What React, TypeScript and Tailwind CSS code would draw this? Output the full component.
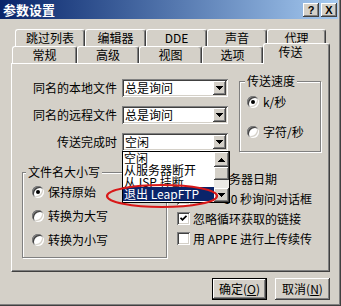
import React from 'react'

const raised = 'shadow-[inset_-1px_-1px_0_#404040,inset_1px_1px_0_#fff,inset_-2px_-2px_0_#808080]'
const sunken = 'shadow-[inset_1px_1px_0_#808080,inset_-1px_-1px_0_#fff,inset_2px_2px_0_#404040,inset_-2px_-2px_0_#d4d0c8]'
const tabBase = 'h-[17px] flex items-center justify-center border-t border-l border-r border-t-white border-l-white border-r-[#404040] rounded-t-[3px] shadow-[inset_-1px_0_0_#808080] leading-[14px]'

const backTabs = [
  { label: '跳过列表', w: 'w-[70px]' },
  { label: '编辑器', w: 'w-[61px]' },
  { label: 'DDE', w: 'w-[61px]' },
  { label: '声音', w: 'w-[60px]' },
  { label: '代理', w: 'w-[59px]' },
]

const frontTabs = [
  { label: '常规', w: 'w-[65px]' },
  { label: '高级', w: 'w-[62px]' },
  { label: '视图', w: 'w-[63px]' },
  { label: '选项', w: 'w-[61px]' },
]

function Arrow({ up = false }: { up?: boolean }) {
  return (
    <svg width="7" height="4" viewBox="0 0 7 4" className={up ? 'rotate-180' : ''}>
      <path d="M0 0h7v1h-1v1h-1v1h-1v1h-1v-1h-1v-1h-1v-1h-1z" fill="#000" />
    </svg>
  )
}

function Combo({ value, children }: { value: string; children?: React.ReactNode }) {
  return (
    <div className={`relative w-[106px] h-[18px] bg-white flex items-center ${sunken}`}>
      <span className="flex-1 pl-[3px] leading-[14px]">{value}</span>
      <div className={`mr-[2px] w-[13px] h-[14px] bg-[#d4d0c8] flex items-center justify-center ${raised}`}>
        <Arrow />
      </div>
      {children}
    </div>
  )
}

function Radio({ checked = false, label }: { checked?: boolean; label: string }) {
  return (
    <div className="flex items-center gap-[4px] h-[14px]">
      <span className="w-[12px] h-[12px] rounded-full bg-white flex items-center justify-center shadow-[inset_1px_1px_0_#808080,inset_-1px_-1px_0_#fff,inset_2px_2px_0_#404040,inset_-2px_-2px_0_#d4d0c8]">
        {checked && <span className="w-[4px] h-[4px] rounded-full bg-black" />}
      </span>
      <span className="leading-[14px]">{label}</span>
    </div>
  )
}

function Check({ checked = false, children }: { checked?: boolean; children: React.ReactNode }) {
  return (
    <div className="flex items-center gap-[3px] h-[13px]">
      <span className={`w-[13px] h-[13px] shrink-0 bg-white flex items-center justify-center ${sunken}`}>
        {checked && (
          <svg width="7" height="7" viewBox="0 0 7 7">
            <polyline points="0.5,2.8 2.5,4.8 6.5,0.8" fill="none" stroke="#000" strokeWidth="1.8" />
          </svg>
        )}
      </span>
      <span className="leading-[13px] whitespace-nowrap">{children}</span>
    </div>
  )
}

function Group({ title, titleClass, className, children }: { title: string; titleClass: string; className: string; children: React.ReactNode }) {
  return (
    <div className={`relative border border-[#808080] shadow-[inset_1px_1px_0_#fff,1px_1px_0_#fff] ${className}`}>
      <span className={`absolute -top-[8px] px-[2px] bg-[#d4d0c8] leading-[14px] ${titleClass}`}>{title}</span>
      {children}
    </div>
  )
}

function DropList() {
  return (
    <div className="absolute top-full left-0 z-20 w-[108px] h-[52px] bg-white border border-black flex">
      <div className="flex-1 flex flex-col">
        <div className="h-[12px] pl-[1px] leading-[12px]">空闲</div>
        <div className="h-[12px] pl-[1px] leading-[12px]">从服务器断开</div>
        <div className="h-[11px] pl-[1px] leading-[12px] overflow-hidden">从 ISP 挂断</div>
        <div className="h-[14px] pl-[1px] leading-[14px] bg-[#0a246a] text-white">退出 LeapFTP</div>
      </div>
      <div className="w-[15px] flex flex-col bg-[#ebe9e5]">
        <div className={`h-[15px] bg-[#d4d0c8] flex items-center justify-center ${raised}`}>
          <Arrow up />
        </div>
        <div className={`h-[13px] bg-[#d4d0c8] ${raised}`} />
        <div className="flex-1" />
        <div className={`h-[14px] bg-[#d4d0c8] flex items-center justify-center ${raised}`}>
          <Arrow />
        </div>
      </div>
    </div>
  )
}

export default function App() {
  return (
    <div className="relative w-[341px] h-[306px] overflow-hidden bg-[#d4d0c8] border-r border-b border-[#404040] shadow-[inset_-1px_-1px_0_#808080] text-[12px] text-black font-['Noto_Sans_CJK_SC',sans-serif]">
      {/* title bar */}
      <div className="h-[19px] mr-[2px] pl-[3px] pr-[1px] flex items-center bg-linear-to-r from-[#0a246a] to-[#a6caf0]">
        <span className="flex-1 text-white font-bold text-[13px] leading-[16px]">参数设置</span>
        <div className="flex gap-[2px]">
          <div className={`w-[16px] h-[14px] bg-[#d4d0c8] flex items-center justify-center font-bold text-[11px] leading-[12px] font-['Liberation_Sans',sans-serif] ${raised}`}>?</div>
          <div className={`w-[16px] h-[14px] bg-[#d4d0c8] flex items-center justify-center font-bold text-[11px] leading-[12px] font-['Liberation_Sans',sans-serif] ${raised}`}>X</div>
        </div>
      </div>

      <div className="pl-[11px]">
        {/* tabs */}
        <div className="mt-[10px] pl-[4px] flex">
          {backTabs.map((t) => (
            <div key={t.label} className={`${tabBase} ${t.w}`}>{t.label}</div>
          ))}
        </div>
        <div className="pl-[1px] flex items-start h-[17px]">
          {frontTabs.map((t) => (
            <div key={t.label} className={`${tabBase} ${t.w}`}>{t.label}</div>
          ))}
          <div className="relative z-10 -mt-[3px] h-[21px] w-[67px] pr-[12px] pb-[4px] bg-[#d4d0c8] flex items-center justify-center border-t border-l border-r border-t-white border-l-white border-r-[#404040] rounded-t-[3px] shadow-[inset_-1px_0_0_#808080] leading-[14px]">
            传送
          </div>
        </div>

        {/* panel */}
        <div className="w-[319px] h-[209px] border border-t-white border-l-white border-r-[#404040] border-b-[#404040] shadow-[inset_-1px_-1px_0_#808080] flex flex-col">
          <div className="flex items-start pt-[15px]">
            <div className="flex flex-col gap-[9px]">
              <div className="flex items-center">
                <span className="w-[105px] text-right leading-[14px]">同名的本地文件</span>
                <div className="ml-[5px]"><Combo value="总是询问" /></div>
              </div>
              <div className="flex items-center">
                <span className="w-[105px] text-right leading-[14px]">同名的远程文件</span>
                <div className="ml-[5px]"><Combo value="总是询问" /></div>
              </div>
              <div className="flex items-center">
                <span className="w-[105px] text-right leading-[14px]">传送完成时</span>
                <div className="ml-[5px]">
                  <Combo value="空闲">
                    <DropList />
                  </Combo>
                </div>
              </div>
            </div>
            <Group title="传送速度" titleClass="left-[5px]" className="ml-[11px] mt-[2px] w-[82px] h-[71px] pl-[7px] pt-[13px] flex flex-col gap-[16px]">
              <Radio checked label="k/秒" />
              <Radio label="字符/秒" />
            </Group>
          </div>

          <div className="flex items-start mt-[20px]">
            <Group title="文件名大小写" titleClass="left-[3px]" className="ml-[10px] w-[145px] h-[86px] pl-[9px] pt-[12px] flex flex-col gap-[10px]">
              <Radio checked label="保持原始" />
              <Radio label="转换为大写" />
              <Radio label="转换为小写" />
            </Group>
            <div className="ml-[10px] flex flex-col gap-[7px]">
              <Check>检查服务器日期</Check>
              <Check>
                <span className="inline-block w-[31px]" />30 秒询问对话框
              </Check>
              <Check checked>忽略循环获取的链接</Check>
              <Check>用 APPE 进行上传续传</Check>
            </div>
          </div>
        </div>

        {/* buttons */}
        <div className="w-[319px] mt-[6px] flex justify-end gap-[8px]">
          <div className="w-[55px] h-[22px] border border-black">
            <div className={`w-full h-full flex items-center justify-center leading-[14px] ${raised}`}>
              确定(<span className="underline">O</span>)
            </div>
          </div>
          <div className={`w-[55px] h-[22px] flex items-center justify-center leading-[14px] ${raised}`}>
            取消(<span className="underline">N</span>)
          </div>
        </div>
      </div>

      {/* red annotation ellipse */}
      <svg className="absolute left-[105px] top-[183px] z-30" width="114" height="26" viewBox="0 0 114 26">
        <ellipse cx="57" cy="13" rx="55" ry="11" fill="none" stroke="#d81818" strokeWidth="2.2" />
      </svg>
    </div>
  )
}
